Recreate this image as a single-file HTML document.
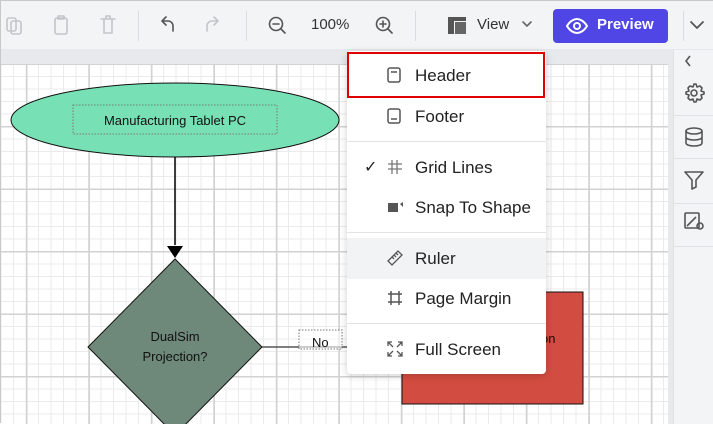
<!DOCTYPE html><html><head><style>
*{margin:0;padding:0;box-sizing:border-box}
body{width:713px;height:423px;overflow:hidden;background:#fff;font-family:"Liberation Sans",sans-serif;position:relative;border:1px solid #c8c8c8}
.abs{position:absolute}
#tb{left:0;top:0;width:713px;height:49px;background:#f3f4f6;border-bottom:1px solid #e5e7eb}
.div{position:absolute;top:10px;width:1px;height:30px;background:#dcdde0}
#strip{left:0;top:49px;width:669px;height:14px;background:#e8e9ec}
#canvas{left:0;top:63px;width:667px;height:360px;
background-color:#fff;
background-image:linear-gradient(#d2d2d2 0 1.5px,transparent 1.5px),linear-gradient(90deg,#d2d2d2 0 1.5px,transparent 1.5px),linear-gradient(#ebebeb 0 1px,transparent 1px),linear-gradient(90deg,#ebebeb 0 1px,transparent 1px);
background-size:62.5px 62.5px,62.5px 62.5px,12.5px 12.5px,12.5px 12.5px;
background-position:-37.5px -0.5px,-37.5px 0,-0.5px -0.5px,-0.5px 0}
#sb{left:667px;top:49px;width:6px;height:374px;background:#e8e9ec}
#panel{left:672px;top:49px;width:41px;height:374px;background:#f3f4f6;border-left:1px solid #e0e0e0}
.sep{position:absolute;left:0;width:41px;height:1px;background:#e0e1e4}
#menu{left:346px;top:50px;width:199px;height:323px;background:#fff;border-radius:4px;box-shadow:0 2px 8px rgba(0,0,0,.18)}
.it{position:absolute;left:0;width:199px;height:41px;font-size:17px;color:#222;line-height:41px;padding-left:68px}
.it svg{position:absolute;left:40px;top:12px}
.msep{position:absolute;left:0;width:199px;height:1px;background:#e3e3e3}
</style></head><body>
<div id="tb" class="abs">
<svg class="abs" style="left:0;top:0" width="713" height="49" fill="none" stroke-linecap="round" stroke-linejoin="round">
<g stroke="#c3c5c9" stroke-width="1.6"><rect x="6" y="17" width="9" height="13" rx="2"/><rect x="10" y="20" width="10" height="13" rx="2"/>
<rect x="54" y="17" width="12" height="16" rx="2"/><rect x="57" y="15" width="6" height="3"/>
<path d="M100 18h14M103 18v14h8v-14M105 18v-3h4v3"/>
<path d="M213 16l4 4-4 4M217 20h-6a5 5 0 0 0-5 5v5"/></g>
<g stroke="#555" stroke-width="1.6"><path d="M165 16l-4 4 4 4M161 20h6a5 5 0 0 1 5 5v5"/>
<circle cx="275" cy="23" r="6.5"/><path d="M272 23h6M280 28l4 4"/>
<circle cx="382" cy="23" r="6.5"/><path d="M379 23h6M382 20v6M387 28l4 4"/>
<path d="M522 21l4 4 4-4" stroke="#666"/><path d="M690 21l6 6 6-6" stroke-width="1.8"/></g>
</svg>
<div class="div" style="left:137px"></div><div class="div" style="left:245px"></div><div class="div" style="left:414px"></div><div class="div" style="left:682px"></div>
<div class="abs" style="left:310px;top:15px;font-size:15px;color:#333">100%</div>
<svg class="abs" style="left:447px;top:16px" width="18" height="17"><rect x="0" y="0" width="18" height="4" fill="#555"/><rect x="0" y="4" width="6" height="13" fill="#555"/><rect x="7" y="5" width="11" height="12" fill="#666"/></svg>
<div class="abs" style="left:476px;top:15px;font-size:15px;color:#333">View</div>
<div class="abs" style="left:552px;top:8px;width:115px;height:34px;background:#4f46e5;border-radius:4px"></div>
<svg class="abs" style="left:564px;top:14px" width="24" height="22" fill="none" stroke="#fff" stroke-width="2"><path d="M2 11c3-5 7-7 10-7s7 2 10 7c-3 5-7 7-10 7s-7-2-10-7z"/><circle cx="12" cy="11" r="3"/></svg>
<div class="abs" style="left:596px;top:15px;font-size:15px;color:#fff;font-weight:bold">Preview</div>
</div>
<div id="strip" class="abs"></div>
<div id="canvas" class="abs"></div>
<svg class="abs" style="left:0;top:63px" width="667" height="360">
<ellipse cx="174" cy="56" rx="164" ry="37" fill="#77e0b4" stroke="#111" stroke-width="1"/>
<rect x="72" y="41" width="204" height="29" fill="none" stroke="#777" stroke-dasharray="1.5 1.5"/>
<text x="174" y="61" font-size="13" text-anchor="middle" fill="#111" font-family="Liberation Sans">Manufacturing Tablet PC</text>
<path d="M174 93v88" stroke="#000" stroke-width="1.5"/><path d="M166 182h16l-8 12z" fill="#000"/>
<path d="M174 195L261 283L174 371L87 283Z" fill="#6e887a" stroke="#111"/>
<text x="174" y="277" font-size="13" text-anchor="middle" fill="#111" font-family="Liberation Sans">DualSim</text>
<text x="174" y="297" font-size="13" text-anchor="middle" fill="#111" font-family="Liberation Sans">Projection?</text>
<path d="M261 283H346" stroke="#555" stroke-width="1.5"/>
<rect x="298" y="266" width="43" height="19" fill="#fff" fill-opacity=".6" stroke="#777" stroke-dasharray="1.5 1.5"/>
<text x="311" y="283" font-size="13" fill="#111" font-family="Liberation Sans">No</text>
<rect x="401" y="228" width="181" height="112" fill="#d34c41" stroke="#111"/>
<text x="540" y="279" font-size="13" fill="#111" font-family="Liberation Sans">on</text>
</svg>
<div id="sb" class="abs"></div>
<div id="panel" class="abs">
<svg class="abs" style="left:0;top:0" width="41" height="200" fill="none" stroke="#555" stroke-width="1.6" stroke-linejoin="round">
<path d="M16 6l-4 5 4 5"/>
<circle cx="20" cy="43" r="3"/><path d="M20 34l2 0 1 3 3-1 2 2-1 3 3 1v2l-3 1 1 3-2 2-3-1-1 3h-2l-1-3-3 1-2-2 1-3-3-1v-2l3-1-1-3 2-2 3 1 1-3z"/>
<ellipse cx="20" cy="81" rx="8" ry="3"/><path d="M12 81v12c0 2 4 3 8 3s8-1 8-3V81M12 87c0 2 4 3 8 3s8-1 8-3"/>
<path d="M11 122h18l-7 8v7l-4 2v-9z"/>
<rect x="11" y="163" width="14" height="15" rx="1"/><path d="M13 176l9-9"/><circle cx="26" cy="176" r="3"/>
</svg>
<div class="sep" style="top:65px"></div><div class="sep" style="top:108px"></div><div class="sep" style="top:153px"></div><div class="sep" style="top:196px"></div>
</div>
<div id="menu" class="abs">
<div class="abs" style="left:0;top:1px;width:198px;height:46px;border:2px solid #e00000"></div>
<div class="it" style="top:4px"><svg width="14" height="16" fill="none" stroke="#555" stroke-width="1.5"><rect x="1" y="1" width="12" height="14" rx="2"/><path d="M4 5h6"/></svg>Header</div>
<div class="it" style="top:45px"><svg width="14" height="16" fill="none" stroke="#555" stroke-width="1.5"><rect x="1" y="1" width="12" height="14" rx="2"/><path d="M4 11h6"/></svg>Footer</div>
<div class="msep" style="top:90px"></div>
<div class="abs" style="left:17px;top:106px;font-size:16px;color:#222">✓</div>
<div class="it" style="top:96px"><svg width="16" height="16" fill="none" stroke="#777" stroke-width="1.3"><path d="M5 1v14M10 1v14M1 5h14M1 10h14"/></svg>Grid Lines</div>
<div class="it" style="top:136px"><svg width="16" height="16"><rect x="1" y="4" width="10" height="9" fill="#555"/><path d="M13 5l3-2v5z" fill="#555"/></svg>Snap To Shape</div>
<div class="msep" style="top:181px"></div>
<div class="it" style="top:187px;background:#f2f3f5"><svg width="16" height="16" fill="none" stroke="#555" stroke-width="1.3"><path d="M1 11L11 1l4 4L5 15z M5 7l2 2M7 5l2 2M9 3l2 2"/></svg>Ruler</div>
<div class="it" style="top:227px"><svg width="16" height="16" fill="none" stroke="#555" stroke-width="1.5"><path d="M4 1v14M12 1v14M1 4h14M1 12h14"/></svg>Page Margin</div>
<div class="msep" style="top:272px"></div>
<div class="it" style="top:278px"><svg width="16" height="16" fill="none" stroke="#555" stroke-width="1.3"><path d="M1 5V1h4M11 1h4v4M15 11v4h-4M5 15H1v-4M1 1l5 5M15 1l-5 5M15 15l-5-5M1 15l5-5"/></svg>Full Screen</div>
</div>
</body></html>
